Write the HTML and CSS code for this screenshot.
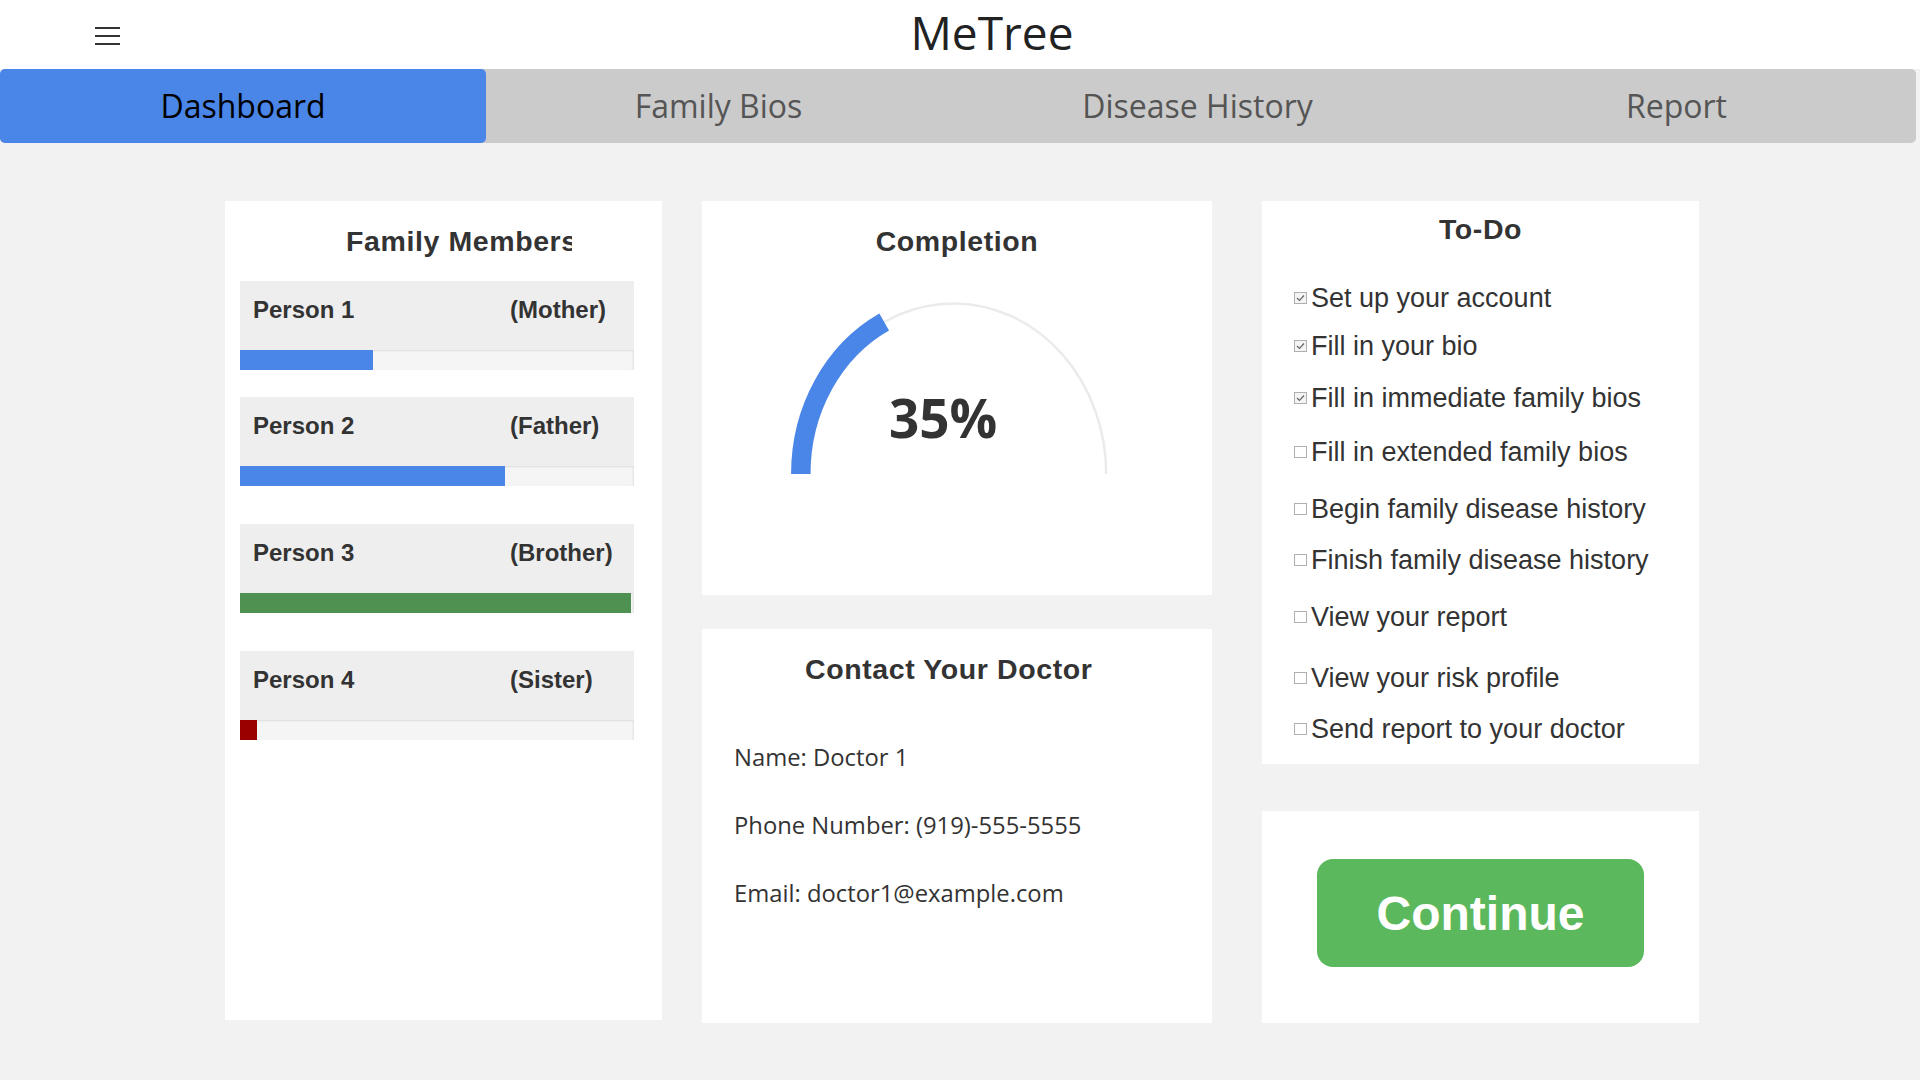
FILE: index.html
```html
<!DOCTYPE html>
<html lang="en">
<head>
<meta charset="utf-8">
<title>MeTree</title>
<link rel="stylesheet" href="styles.css">
</head>
<body>
<header class="topbar">
  <div class="hamburger"><span></span><span></span><span></span></div>
  <h1 class="brand">MeTree</h1>
</header>
<nav class="tabs">
  <a class="tab active">Dashboard</a>
  <a class="tab">Family Bios</a>
  <a class="tab">Disease History</a>
  <a class="tab">Report</a>
</nav>
<main class="dash">
  <section class="col col-left">
    <div class="card members">
      <div class="card-title clip members-title">Family Members</div>
      <div class="member">
        <div class="member-head"><span class="m-name">Person 1</span><span class="m-rel">(Mother)</span></div>
        <div class="bar"><div class="fill blue" style="width:133px"></div></div>
      </div>
      <div class="member">
        <div class="member-head"><span class="m-name">Person 2</span><span class="m-rel">(Father)</span></div>
        <div class="bar"><div class="fill blue" style="width:265px"></div></div>
      </div>
      <div class="member">
        <div class="member-head"><span class="m-name">Person 3</span><span class="m-rel">(Brother)</span></div>
        <div class="bar"><div class="fill green" style="width:391px"></div></div>
      </div>
      <div class="member">
        <div class="member-head"><span class="m-name">Person 4</span><span class="m-rel">(Sister)</span></div>
        <div class="bar"><div class="fill red" style="width:17px"></div></div>
      </div>
    </div>
  </section>
  <section class="col col-mid">
    <div class="card completion">
      <div class="card-title center">Completion</div>
      <div class="gauge">
        <svg width="350" height="190" viewBox="0 0 350 190">
          <path d="M 18.8 184 A 152.7 170.5 0 0 1 324.2 184" fill="none" stroke="#ebebeb" stroke-width="2.5"/>
          <path d="M 18.8 184 A 152.7 170.5 0 0 1 102.2 32.1" fill="none" stroke="#4a86e8" stroke-width="19.5"/>
        </svg>
        <div class="pct">35%</div>
      </div>
    </div>
    <div class="card contact">
      <div class="card-title clip contact-title">Contact Your Doctor</div>
      <p class="c-line first">Name: Doctor 1</p>
      <p class="c-line">Phone Number: (919)-555-5555</p>
      <p class="c-line">Email: doctor1@example.com</p>
    </div>
  </section>
  <section class="col col-right">
    <div class="card todo">
      <div class="card-title center todo-title">To-Do</div>
      <ul class="todo-list">
        <li><span class="cb checked"><svg width="9" height="8" viewBox="0 0 9 8"><path d="M1 4 L3.5 6.5 L8 1.5" fill="none" stroke="#666" stroke-width="1.2"/></svg></span>Set up your account</li>
        <li><span class="cb checked"><svg width="9" height="8" viewBox="0 0 9 8"><path d="M1 4 L3.5 6.5 L8 1.5" fill="none" stroke="#666" stroke-width="1.2"/></svg></span>Fill in your bio</li>
        <li><span class="cb checked"><svg width="9" height="8" viewBox="0 0 9 8"><path d="M1 4 L3.5 6.5 L8 1.5" fill="none" stroke="#666" stroke-width="1.2"/></svg></span>Fill in immediate family bios</li>
        <li><span class="cb"></span>Fill in extended family bios</li>
        <li><span class="cb"></span>Begin family disease history</li>
        <li><span class="cb"></span>Finish family disease history</li>
        <li><span class="cb"></span>View your report</li>
        <li><span class="cb"></span>View your risk profile</li>
        <li><span class="cb"></span>Send report to your doctor</li>
      </ul>
    </div>
    <div class="card continue-card">
      <button class="continue">Continue</button>
    </div>
  </section>
</main>
</body>
</html>
```
FILE: styles.css
```css
* { box-sizing: border-box; }
html, body { margin: 0; padding: 0; }
body {
  background: #f2f2f2;
  color: #333;
  font-family: "Liberation Sans", Arial, sans-serif;
  min-height: 1080px;
}

.topbar {
  height: 69px;
  background: #fff;
  display: flex;
  align-items: flex-start;
}
.hamburger {
  width: 25px;
  height: 18px;
  margin: 27px 0 0 95px;
  display: flex;
  flex-direction: column;
  justify-content: space-between;
}
.hamburger span {
  display: block;
  height: 2px;
  background: #333;
}
.brand {
  flex: 1;
  margin: 0;
  padding-right: 56px;
  text-align: center;
  font-family: "Open Sans", sans-serif;
  font-weight: 400;
  font-size: 46px;
  line-height: 65px;
  color: #222;
}

.tabs {
  display: flex;
  width: calc(100% - 4px);
  height: 74px;
  background: #cbcbcb;
  border-radius: 5px;
}
.tab {
  flex: 1 1 0;
  text-align: center;
  font-family: "Open Sans", sans-serif;
  font-size: 32px;
  line-height: 74px;
  color: #555;
  white-space: nowrap;
}
.tab.active {
  padding: 0 3.5px;
  margin-right: -7px;
  background: #4a86e8;
  color: #000;
  border-radius: 5px;
}

.dash {
  display: flex;
  align-items: flex-start;
  padding: 58px 0 0 225px;
}
.col { display: flex; flex-direction: column; }
.col-left { width: 437px; }
.col-mid { width: 510px; margin-left: 40px; }
.col-right { width: 437px; margin-left: 50px; }

.card { background: #fff; }

.card-title {
  font-weight: 700;
  font-size: 28.5px;
  letter-spacing: 0.6px;
  line-height: 32px;
  color: #333;
  white-space: nowrap;
}
.card-title.center { text-align: center; }
.card-title.clip { overflow: hidden; }

/* Family members */
.members {
  height: 819px;
  padding: 24px 0 0 15px;
}
.members-title {
  width: 226px;
  margin-left: 106px;
}
.member { width: 394px; }
.members-title + .member { margin-top: 24px; }
.member + .member { margin-top: 38px; }
.members-title + .member + .member { margin-top: 27px; }
.member-head {
  height: 69px;
  background: #eee;
  display: flex;
  padding-left: 13px;
  font-weight: 700;
  font-size: 24px;
  line-height: 57px;
  color: #333;
}
.m-name { width: 257px; }
.bar {
  height: 20px;
  background: #f5f5f5;
  box-shadow: inset 0 1px 2px rgba(0,0,0,0.1);
  border-right: 1px solid #e6e6e6;
}
.fill { height: 100%; }
.fill.blue { background: #4a86e8; }
.fill.green { background: #4f9150; }
.fill.red { background: #990000; }

/* Completion */
.completion {
  height: 394px;
  padding-top: 24px;
}
.gauge {
  position: relative;
  width: 350px;
  height: 190px;
  margin: 33px auto 0;
}
.gauge svg { display: block; }
.pct {
  position: absolute;
  left: 107px;
  top: 101px;
  font-family: "Open Sans", sans-serif;
  font-weight: 700;
  font-size: 53px;
  line-height: 54px;
  color: #333;
}

/* Contact */
.contact {
  height: 394px;
  margin-top: 34px;
  padding: 24px 0 0 32px;
}
.contact-title {
  width: 288px;
  margin-left: 71px;
}
.c-line {
  margin: 36px 0 0;
  font-family: "Open Sans", sans-serif;
  font-size: 23.8px;
  line-height: 32px;
  color: #333;
}
.c-line.first { margin-top: 56px; }

/* To-do */
.todo {
  height: 563px;
  padding-top: 12px;
}
.todo-list {
  list-style: none;
  margin: 37px 0 0;
  padding: 0 0 0 32px;
}
.todo-list li {
  display: flex;
  align-items: center;
  font-size: 27px;
  line-height: 32px;
  color: #333;
  white-space: nowrap;
}
.todo-list li:nth-child(2) { margin-top: 16px; }
.todo-list li:nth-child(3) { margin-top: 20px; }
.todo-list li:nth-child(4) { margin-top: 22px; }
.todo-list li:nth-child(5) { margin-top: 25px; }
.todo-list li:nth-child(6) { margin-top: 19px; }
.todo-list li:nth-child(7) { margin-top: 25px; }
.todo-list li:nth-child(8) { margin-top: 29px; }
.todo-list li:nth-child(9) { margin-top: 19px; }
.cb {
  width: 13px;
  height: 12px;
  border: 1px solid #b0b0b0;
  background: #fff;
  margin-right: 4px;
  flex: none;
  display: flex;
  align-items: center;
  justify-content: center;
}
.cb.checked { background: #f4f4f4; }
.cb svg { display: block; }

/* Continue */
.continue-card {
  height: 212px;
  margin-top: 47px;
  padding-top: 48px;
}
.continue {
  display: block;
  width: 327px;
  height: 108px;
  margin: 0 auto;
  border: none;
  border-radius: 16px;
  background: #5cb85c;
  color: #fff;
  font-family: "Liberation Sans", Arial, sans-serif;
  font-weight: 700;
  font-size: 48px;
  padding: 0;
}
```
